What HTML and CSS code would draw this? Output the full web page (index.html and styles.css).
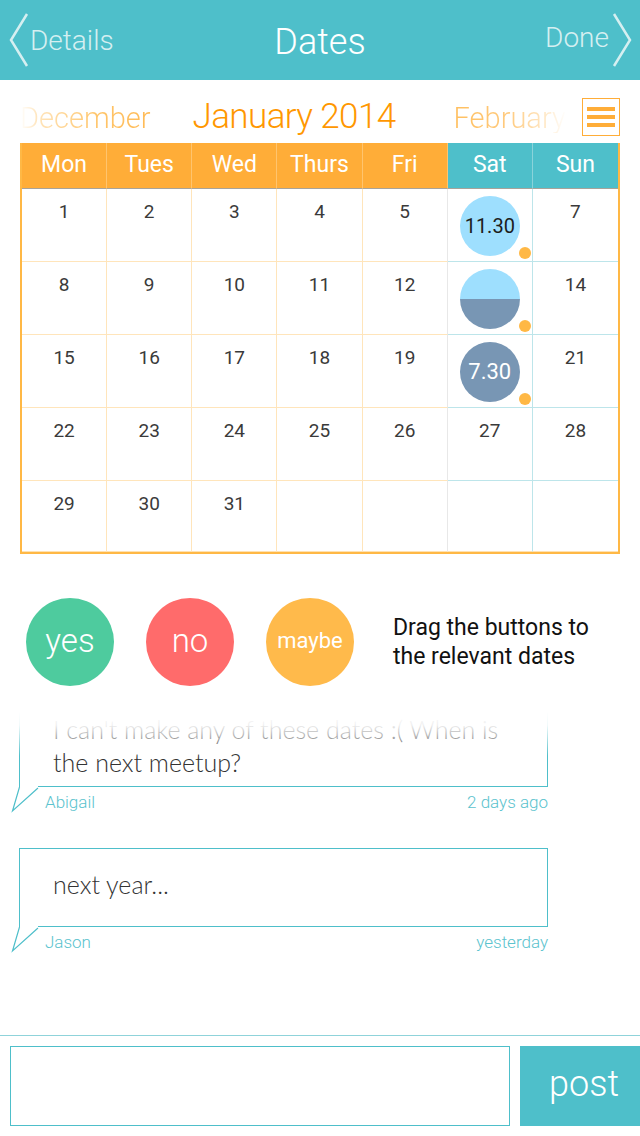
FILE: index.html
```html
<!DOCTYPE html>
<html>
<head>
<meta charset="utf-8">
<link rel="stylesheet" href="styles.css">
</head>
<body>
<div class="screen">
  <header class="topbar">
    <div class="nav nav-left">
      <svg class="chev" width="20" height="54" viewBox="0 0 20 54"><polyline points="18,1 2,27 18,53" /></svg>
      <span>Details</span>
    </div>
    <h1 class="title">Dates</h1>
    <div class="nav nav-right">
      <span class="done">Done</span>
      <svg class="chev" width="20" height="54" viewBox="0 0 20 54"><polyline points="2,1 18,27 2,53" /></svg>
    </div>
  </header>

  <div class="months">
    <span class="month prev">December</span>
    <span class="month current">January 2014</span>
    <span class="month next">February</span>
    <div class="menu"><span></span><span></span><span></span></div>
  </div>

  <div class="calendar">
    <div class="dow">Mon</div>
    <div class="dow">Tues</div>
    <div class="dow">Wed</div>
    <div class="dow">Thurs</div>
    <div class="dow">Fri</div>
    <div class="dow we">Sat</div>
    <div class="dow we last">Sun</div>

    <div class="day">1</div>
    <div class="day">2</div>
    <div class="day">3</div>
    <div class="day">4</div>
    <div class="day fri">5</div>
    <div class="day we"><div class="circle light">11.30</div><span class="dot"></span></div>
    <div class="day we last">7</div>

    <div class="day">8</div>
    <div class="day">9</div>
    <div class="day">10</div>
    <div class="day">11</div>
    <div class="day fri">12</div>
    <div class="day we"><div class="circle half"></div><span class="dot"></span></div>
    <div class="day we last">14</div>

    <div class="day">15</div>
    <div class="day">16</div>
    <div class="day">17</div>
    <div class="day">18</div>
    <div class="day fri">19</div>
    <div class="day we"><div class="circle slate">7.30</div><span class="dot"></span></div>
    <div class="day we last">21</div>

    <div class="day">22</div>
    <div class="day">23</div>
    <div class="day">24</div>
    <div class="day">25</div>
    <div class="day fri">26</div>
    <div class="day we">27</div>
    <div class="day we last">28</div>

    <div class="day bottom">29</div>
    <div class="day bottom">30</div>
    <div class="day bottom">31</div>
    <div class="day bottom"></div>
    <div class="day bottom fri"></div>
    <div class="day bottom we"></div>
    <div class="day bottom we last"></div>
  </div>

  <div class="actions">
    <div class="btn yes">yes</div>
    <div class="btn no">no</div>
    <div class="btn maybe">maybe</div>
    <div class="hint">Drag the buttons to<br>the relevant dates</div>
  </div>

  <div class="chat">
    <div class="fade"></div>
    <div class="msg first">
      <div class="box box-first">I can't make any of these dates :( When is<br>the next meetup?
        <svg class="tail" width="30" height="26" viewBox="0 0 30 26"><polyline points="8.5,0 1.5,24 27,1" /></svg>
      </div>
      <div class="meta"><span>Abigail</span><span>2 days ago</span></div>
    </div>
    <div class="msg">
      <div class="box">next year...
        <svg class="tail" width="30" height="26" viewBox="0 0 30 26"><polyline points="8.5,0 1.5,24 27,1" /></svg>
      </div>
      <div class="meta"><span>Jason</span><span>yesterday</span></div>
    </div>
  </div>

  <div class="composer">
    <div class="input"></div>
    <div class="post">post</div>
  </div>
</div>
</body>
</html>
```

FILE: styles.css
```css
html, body {
  margin: 0;
  padding: 0;
}
body {
  width: 640px;
  height: 1136px;
  overflow: hidden;
  background: #fff;
  font-family: Roboto, "Liberation Sans", sans-serif;
}
.screen {
  display: flex;
  flex-direction: column;
  height: 1136px;
}

/* top bar */
.topbar {
  height: 80px;
  flex: none;
  background: #4EBFCA;
  display: grid;
  grid-template-columns: 1fr auto 1fr;
  align-items: center;
}
.nav {
  display: flex;
  align-items: center;
  color: #D5EFF1;
  font-size: 28px;
  font-weight: 300;
}
.nav-left {
  padding-left: 9px;
  gap: 1px;
}
.nav-right {
  justify-self: end;
  padding-right: 8px;
  gap: 3px;
}
.done {
  padding-bottom: 5px;
}
.chev polyline {
  fill: none;
  stroke: #D5EFF1;
  stroke-width: 2.5;
}
.title {
  margin: 0;
  font-size: 36px;
  font-weight: 300;
  color: #fff;
  padding-top: 3px;
}

/* months */
.months {
  height: 63px;
  flex: none;
  box-sizing: border-box;
  padding-top: 19px;
  display: flex;
  align-items: baseline;
}
.month {
  line-height: 1;
  font-weight: 300;
  white-space: nowrap;
}
.prev {
  font-size: 29px;
  margin-left: 20px;
  background: linear-gradient(90deg, #ffffff 0%, #FFE4BA 14%, #FFC56A 60%, #FFBA55 100%);
  -webkit-background-clip: text;
  background-clip: text;
  color: transparent;
}
.current {
  font-size: 35px;
  letter-spacing: -0.6px;
  margin-left: 42px;
  color: #FF9700;
}
.next {
  font-size: 29px;
  margin-left: 58px;
  background: linear-gradient(90deg, #FFBF5E 0%, #FFCB80 50%, #FFE6C2 80%, #ffffff 100%);
  -webkit-background-clip: text;
  background-clip: text;
  color: transparent;
}
.menu {
  align-self: flex-start;
  margin-top: -1px;
  margin-left: auto;
  margin-right: 20px;
  width: 38px;
  height: 38px;
  flex: none;
  box-sizing: border-box;
  border: 1px solid #FFAD38;
  padding: 0 4px;
  display: flex;
  flex-direction: column;
  justify-content: center;
  gap: 4px;
}
.menu span {
  height: 4px;
  background: #FFAD38;
}

/* calendar */
.calendar {
  flex: none;
  margin-left: 20px;
  width: 600px;
  box-sizing: border-box;
  border: 2px solid #FFB845;
  border-top: none;
  display: grid;
  grid-template-columns: repeat(7, 1fr);
  grid-template-rows: 46px repeat(4, 73px) 71px;
}
.dow {
  background: #FFAD38;
  color: #fff;
  font-size: 23px;
  display: flex;
  align-items: center;
  justify-content: center;
  padding-bottom: 3px;
  box-sizing: border-box;
  border-right: 1px solid #FFC46E;
  border-bottom: 1px solid #A8A39A;
}
.dow.we {
  background: #4EBFCA;
  border-right-color: #8AD3DA;
}
.dow.last {
  border-right: none;
}
.day {
  position: relative;
  box-sizing: border-box;
  border-right: 1px solid #FFE5BB;
  border-bottom: 1px solid #FFE5BB;
  text-align: center;
  padding-top: 12px;
  font-size: 19px;
  line-height: 22px;
  color: #3a3a3a;
}
.day.fri {
  border-right-color: #E8E8E8;
}
.day.we {
  border-right-color: #BDE5EA;
  border-bottom-color: #BDE5EA;
}
.day.last {
  border-right: none;
}
.day.bottom {
  border-bottom: 1px solid #FFE2B2;
}
.circle {
  width: 60px;
  height: 60px;
  border-radius: 50%;
  margin: -5px auto 0;
  display: flex;
  align-items: center;
  justify-content: center;
  font-size: 20px;
}
.circle.light {
  background: #9EDFFE;
  color: #1c1c1c;
}
.circle.half {
  background: linear-gradient(#9EDFFE 50%, #7896B4 50%);
}
.circle.slate {
  background: #7896B4;
  color: #fff;
  font-size: 22px;
}
.dot {
  position: absolute;
  left: 71px;
  top: 58px;
  width: 12px;
  height: 12px;
  border-radius: 50%;
  background: #FFB845;
}

/* actions */
.actions {
  flex: none;
  display: flex;
  align-items: center;
  padding: 44px 0 26px 26px;
}
.btn {
  width: 88px;
  height: 88px;
  border-radius: 50%;
  display: flex;
  align-items: center;
  justify-content: center;
  color: #fff;
  font-size: 33px;
  font-weight: 300;
  margin-right: 32px;
  padding-bottom: 4px;
  box-sizing: border-box;
}
.yes { background: #4ECB9E; }
.no { background: #FF6B6B; }
.maybe {
  background: #FFBA4B;
  font-size: 22px;
  font-weight: 400;
}
.hint {
  margin-left: 7px;
  font-size: 23px;
  line-height: 29px;
  color: #111;
}

/* chat */
.chat {
  flex: 1;
  overflow: hidden;
  position: relative;
}
.fade {
  position: absolute;
  top: 0;
  left: 0;
  right: 0;
  height: 44px;
  z-index: 2;
  background: linear-gradient(#ffffff 0%, rgba(255,255,255,0.92) 30%, rgba(255,255,255,0.55) 60%, rgba(255,255,255,0) 100%);
}
.msg {
  position: relative;
  margin-left: 19px;
  width: 529px;
}
.msg.first {
  margin-top: -19px;
}
.msg + .msg {
  margin-top: 31px;
}
.box {
  position: relative;
  border: 1px solid #4EBFCA;
  border-bottom: none;
  padding: 19px 10px 26px 33px;
  font-family: Lato, "Open Sans", sans-serif;
  font-weight: 300;
  font-size: 25px;
  line-height: 33px;
  color: #333;
  white-space: nowrap;
}
.box-first {
  padding-bottom: 8px;
}
.box::after {
  content: "";
  position: absolute;
  left: 18px;
  right: -1px;
  bottom: 0;
  height: 1px;
  background: #4EBFCA;
}
.tail {
  position: absolute;
  left: -9px;
  top: 100%;
}
.tail polyline {
  fill: none;
  stroke: #4EBFCA;
  stroke-width: 1.2;
}
.meta {
  display: flex;
  justify-content: space-between;
  padding-left: 26px;
  height: 30px;
  line-height: 30px;
  font-size: 17px;
  font-weight: 300;
  color: #5BC3CE;
}

/* composer */
.composer {
  flex: none;
  border-top: 1px solid #8FD3DA;
  padding: 10px 0 10px 10px;
  display: flex;
  gap: 10px;
}
.input {
  width: 500px;
  height: 80px;
  box-sizing: border-box;
  border: 1.5px solid #4EBFCA;
}
.post {
  flex: 1;
  height: 80px;
  background: #4EBFCA;
  color: #fff;
  font-size: 36px;
  font-weight: 300;
  display: flex;
  align-items: center;
  justify-content: center;
  padding-left: 8px;
  padding-bottom: 4px;
  box-sizing: border-box;
}
```
